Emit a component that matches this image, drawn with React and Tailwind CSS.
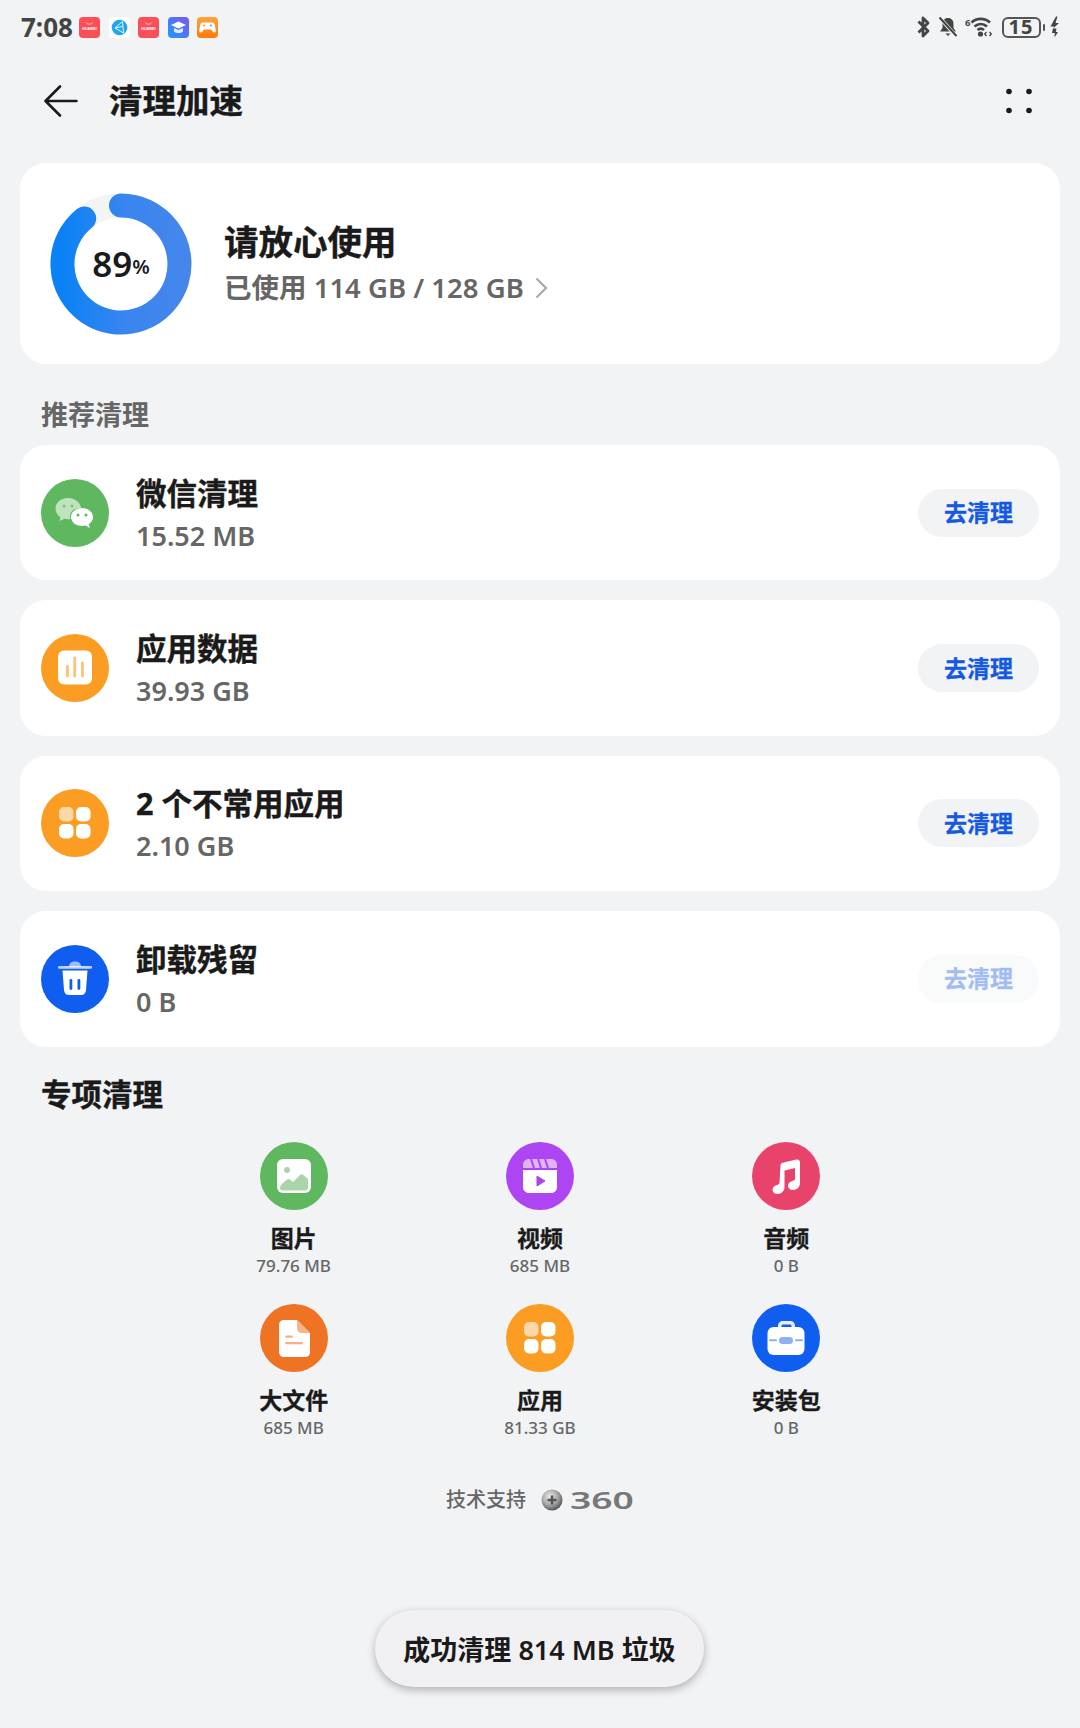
const Shop = () => (
  <svg width="21" height="21" viewBox="0 0 21 21" className="shrink-0">
    <rect width="21" height="21" rx="4" fill="#fb4e58" />
    <path d="M7.5 5.5c.5 2.2 5.5 2.2 6 0" fill="none" stroke="#fff" strokeWidth="0.8" opacity="0.9" />
    <text x="10.5" y="12.8" fontSize="3.6" fill="#fff" textAnchor="middle" fontFamily="Liberation Sans" fontWeight="700">HUAWEI</text>
  </svg>
);
const Tri = () => (
  <svg width="21" height="21" viewBox="0 0 21 21" className="shrink-0">
    <rect width="21" height="21" rx="4" fill="#ffffff" />
    <circle cx="10.5" cy="10.5" r="7.8" fill="#1ea7ee" />
    <path d="M13.5 4.5 6 11l8.5 5-1-11.5ZM6 11l7.5-1.5" fill="none" stroke="#fff" strokeWidth="0.9" />
  </svg>
);
const Cap = () => (
  <svg width="21" height="21" viewBox="0 0 21 21" className="shrink-0">
    <defs>
      <linearGradient id="cap" x1="0" y1="1" x2="1" y2="0">
        <stop offset="0" stopColor="#1f9bff" />
        <stop offset="1" stopColor="#7a55ef" />
      </linearGradient>
    </defs>
    <rect width="21" height="21" rx="4" fill="url(#cap)" />
    <path d="M10.5 4.5 18 8l-7.5 3.5L3 8Z" fill="#fff" />
    <path d="M6 11v3.5c2.5 2 6.5 2 9 0V11l-4.5 2Z" fill="#fff" opacity="0.85" />
  </svg>
);
const Game = () => (
  <svg width="21" height="21" viewBox="0 0 21 21" className="shrink-0">
    <defs>
      <linearGradient id="game" x1="0" y1="0" x2="0" y2="1">
        <stop offset="0" stopColor="#ffa43a" />
        <stop offset="1" stopColor="#fb7a10" />
      </linearGradient>
    </defs>
    <rect width="21" height="21" rx="4" fill="url(#game)" />
    <path d="M6 5.5h9c1.6 0 2.6 1 3 3l.8 5c.3 2-2 2.6-3 1.2L14 12.5H7l-1.8 2.2c-1 1.4-3.3.8-3-1.2l.8-5c.4-2 1.4-3 3-3Z" fill="#fff" />
    <circle cx="7" cy="8.5" r="1" fill="#fb8a20" />
    <circle cx="14" cy="8.5" r="1" fill="#4aa5ee" />
  </svg>
);

const StatusRight = () => (
  <div className="flex items-center">
    <svg width="15" height="22" viewBox="0 0 14 22" className="mr-[7px]" fill="none" stroke="#444" strokeWidth="2.8">
      <path d="M2 5.5 11.5 15 6.5 20V2l5 5L2 16.5" strokeLinejoin="round" />
    </svg>
    <svg width="20" height="22" viewBox="0 0 20 22" className="mr-[7px]">
      <path d="M10 2c3.5 0 5.5 2.5 5.5 6v4l2.500 3.500H2L4.500 12V8C4.500 4.500 6.500 2 10 2Z" fill="#444" />
      <path d="M7.500 17.500h5L10 20Z" fill="#444" />
      <path d="M2 2 18 20" stroke="#f1f3f5" strokeWidth="3.500" />
      <path d="M1.500 1.500 18.500 20" stroke="#444" strokeWidth="2" />
    </svg>
    <svg width="30" height="24" viewBox="0 0 30 24" className="mr-[7px]" fill="none" stroke="#444" strokeWidth="2.800">
      <text x="0" y="11" fontSize="9.500" fontWeight="700" fill="#444" stroke="none" fontFamily="Noto Sans">6</text>
      <path d="M6.500 7.500c5.200-4.800 13-4.800 18.500 0" />
      <path d="M9.500 11.500c3.800-3.200 8.700-3.200 12.500 0" />
      <path d="M12.500 15c2-1.700 4.500-1.700 6.500 0" />
      <circle cx="15.500" cy="19" r="2.600" fill="#444" stroke="none" />
      <path d="M21.500 17l-1.800 2 1.800 2M24.500 17l1.800 2-1.800 2" strokeWidth="1.300" />
    </svg>
    <div className="relative flex h-[21px] w-[39px] items-center justify-center rounded-[6px] border-2 border-[#555] text-[20px] leading-none font-bold tracking-[1px] text-[#444]">
      15
    </div>
    <div className="ml-[2px] h-[7px] w-[2.500px] rounded-sm bg-[#555]" />
    <svg width="11" height="22" viewBox="0 0 10 22" className="ml-[4px]" fill="#444">
      <path d="M6.500 0.500 1 10.500h3.800L3 13l6.500-6H6L8 .5Z" />
      <path d="M3.500 12.500h3.500L6.300 16H8.500L5 21.500 5.300 17H2.500Z" />
    </svg>
  </div>
);

const Donut = () => (
  <div className="relative h-[142px] w-[142px] shrink-0">
    <svg width="142" height="142" viewBox="0 0 142 142">
      <defs>
        <linearGradient id="ring" x1="0" y1="0" x2="1" y2="0">
          <stop offset="0" stopColor="#0a82f6" />
          <stop offset="0.55" stopColor="#3a85ef" />
          <stop offset="1" stopColor="#4486ec" />
        </linearGradient>
      </defs>
      <circle cx="71" cy="71" r="58.500" fill="none" stroke="#f4f4f4" strokeWidth="24" />
      <path
        d="M71 12.500A58.500 58.500 0 1 1 34.200 25.500"
        fill="none"
        stroke="url(#ring)"
        strokeWidth="24"
        strokeLinecap="round"
      />
    </svg>
    <div className="absolute inset-0 flex items-center justify-center text-[#1a1a1a]">
      <span className="text-[35px] leading-none font-semibold">89</span>
      <span className="mt-[6px] text-[20px] leading-none font-semibold">%</span>
    </div>
  </div>
);

const Circle = ({ color, children }) => (
  <svg width="68" height="68" viewBox="0 0 68 68" className="shrink-0">
    <circle cx="34" cy="34" r="34" fill={color} />
    {children}
  </svg>
);

const WeChatIcon = () => (
  <Circle color="#5fb85f">
    <path d="M27 19c7 0 12.500 4.500 13 10-5.500-.5-11 3-11 8.500 0 1 .2 1.800.5 2.500-1 .2-1.600.3-2.500.3-1.200 0-2.400-.2-3.500-.5L18.500 42l.8-3.800C16.300 36 14.500 33 14.500 29.500 14.500 23.500 20 19 27 19Z" fill="#fff" opacity="0.6" />
    <circle cx="23" cy="27" r="1.500" fill="#5fb85f" opacity="0.7" />
    <circle cx="31" cy="27" r="1.500" fill="#5fb85f" opacity="0.7" />
    <path d="M41 29c6.100 0 11 4 11 9 0 3-1.700 5.500-4.300 7.200L49 49l-4.500-2.400c-1.100.3-2.300.4-3.500.4-6.100 0-11-4-11-9s4.900-9 11-9Z" fill="#fff" />
    <circle cx="37" cy="36" r="1.500" fill="#5fb85f" />
    <circle cx="45" cy="36" r="1.500" fill="#5fb85f" />
  </Circle>
);
const ChartIcon = () => (
  <Circle color="#fa9d22">
    <rect x="17" y="16.500" width="34" height="34" rx="6" fill="#fff" />
    <rect x="25" y="31" width="2.800" height="12.500" rx="1.400" fill="#fbc27a" />
    <rect x="32.300" y="22.500" width="2.800" height="21" rx="1.400" fill="#fbc27a" />
    <rect x="40" y="27.500" width="2.800" height="16" rx="1.400" fill="#fbc27a" />
  </Circle>
);
const AppsIcon = () => (
  <Circle color="#fa9d22">
    <rect x="18" y="18" width="14.500" height="14.500" rx="5" fill="#fff" opacity="0.6" />
    <rect x="35" y="18" width="14.500" height="14.500" rx="5" fill="#fff" />
    <rect x="18" y="35" width="14.500" height="14.500" rx="5" fill="#fff" />
    <rect x="35" y="35" width="14.500" height="14.500" rx="5" fill="#fff" />
  </Circle>
);
const TrashIcon = () => (
  <Circle color="#0f5ef0">
    <path d="M28 22c0-4 2.500-5.500 6-5.500s6 1.500 6 5.500Z" fill="#fff" opacity="0.6" />
    <rect x="17" y="21" width="34" height="2.800" rx="1.400" fill="#fff" opacity="0.75" />
    <path d="M21.500 25.500h25L45 45c-.2 3-2 5-5 5H28c-3 0-4.800-2-5-5Z" fill="#fff" />
    <rect x="28.500" y="34" width="2.800" height="11" rx="1.400" fill="#0f5ef0" />
    <rect x="36.500" y="34" width="2.800" height="11" rx="1.400" fill="#0f5ef0" />
  </Circle>
);
const ImageIcon = () => (
  <Circle color="#5fb85f">
    <rect x="17" y="17" width="34" height="34" rx="6" fill="#fff" />
    <circle cx="27" cy="28" r="3" fill="#a9d6a9" />
    <path d="M20 46c0-2 1.500-3.500 3-5l4-3.500c1-.8 2-.8 3 0l3 2.500 7-7c1-1 2.500-1 3.300 0L48 37v9c0 1.500-1 2.500-2.500 2.500h-23C21 48.500 20 47.500 20 46Z" fill="#a9d6a9" />
  </Circle>
);
const VideoIcon = () => (
  <Circle color="#ad45f2">
    <path d="M23 17h22c3.500 0 6 2.500 6 6v3H17v-3c0-3.500 2.500-6 6-6Z" fill="#fff" opacity="0.6" />
    <path d="M25 17l3 9M32 17l3 9M39 17l3 9" stroke="#ad45f2" strokeWidth="2" />
    <path d="M17 28h34v17c0 3.500-2.500 6-6 6H23c-3.500 0-6-2.500-6-6Z" fill="#fff" />
    <path d="M31 34v10l8-5Z" fill="#ad45f2" stroke="#ad45f2" strokeWidth="1" strokeLinejoin="round" />
  </Circle>
);
const MusicIcon = () => (
  <Circle color="#e8446b">
    <path d="M28.500 23.500c0-1.500.8-2.500 2.300-2.800l13.500-3.200c2-.5 3.700.8 3.700 2.800V41c0 3.800-3 7-7 7-3 0-5-1.700-5-4.200 0-2.700 2.200-4.400 5-5 1.300-.3 2-1 2-2.200V26l-10.500 2.500V45c0 3.800-3 7-7 7-3 0-5-1.700-5-4.200 0-2.700 2.200-4.400 5-5 1.300-.3 2-1 2-2.200Z" fill="#fff" />
  </Circle>
);
const FileIcon = () => (
  <Circle color="#ee7322">
    <path d="M24 16h13l13 13v19c0 3-2 5-5 5H24c-3 0-5-2-5-5V21c0-3 2-5 5-5Z" fill="#fff" />
    <path d="M37 16l13 13h-8c-3 0-5-2-5-5Z" fill="#f5b48a" />
    <rect x="25" y="31.500" width="8" height="2.200" rx="1.100" fill="#f3b08a" />
    <rect x="25" y="38" width="18" height="2.200" rx="1.100" fill="#f3b08a" />
  </Circle>
);
const CaseIcon = () => (
  <Circle color="#0f5ef0">
    <path d="M26 24v-2c0-3 2-5 5-5h7c3 0 5 2 5 5v2h-3.500v-2c0-1-.5-1.500-1.500-1.500h-7c-1 0-1.500.5-1.500 1.500v2Z" fill="#fff" opacity="0.9" />
    <rect x="15.500" y="23" width="37" height="28" rx="6" fill="#fff" />
    <rect x="17" y="35.300" width="8" height="2" rx="1" fill="#8fb0f3" />
    <rect x="43" y="35.300" width="8" height="2" rx="1" fill="#8fb0f3" />
    <rect x="27" y="33" width="14" height="7" rx="3.500" fill="#8fb0f3" />
  </Circle>
);

const rows = [
  { icon: <WeChatIcon />, title: "微信清理", size: "15.52 MB" },
  { icon: <ChartIcon />, title: "应用数据", size: "39.93 GB" },
  { icon: <AppsIcon />, title: "2 个不常用应用", size: "2.10 GB" },
  { icon: <TrashIcon />, title: "卸载残留", size: "0 B", off: true },
];

const cells = [
  { icon: <ImageIcon />, name: "图片", size: "79.76 MB" },
  { icon: <VideoIcon />, name: "视频", size: "685 MB" },
  { icon: <MusicIcon />, name: "音频", size: "0 B" },
  { icon: <FileIcon />, name: "大文件", size: "685 MB" },
  { icon: <AppsIcon />, name: "应用", size: "81.33 GB" },
  { icon: <CaseIcon />, name: "安装包", size: "0 B" },
];

export default function App() {
  return (
    <div className="relative h-[1728px] w-[1080px] overflow-hidden bg-[#f1f3f5] font-['Noto_Sans','Noto_Sans_CJK_SC',sans-serif] text-[#1a1a1a]">
      <div className="flex h-[54px] items-center justify-between pr-[20px] pl-[21px]">
        <div className="flex items-center">
          <span className="mr-[7px] w-[51px] text-[26px] leading-none font-bold text-[#444]">7:08</span>
          <div className="flex gap-[8.500px]">
            <Shop />
            <Tri />
            <Shop />
            <Cap />
            <Game />
          </div>
        </div>
        <StatusRight />
      </div>

      <div className="flex h-[94px] items-center justify-between pr-[48px] pl-[44px]">
        <div className="flex items-center">
          <svg width="34" height="32" viewBox="0 0 34 32" fill="none" stroke="#1a1a1a" strokeWidth="2.600" strokeLinecap="round" strokeLinejoin="round">
            <path d="M16 1.500 1.500 16 16 30.500M1.500 16H32.500" />
          </svg>
          <span className="ml-[31px] text-[33.500px] leading-none font-bold [-webkit-text-stroke:0.4px]">清理加速</span>
        </div>
        <svg width="26" height="26" viewBox="0 0 26 26" fill="#1a1a1a">
          <circle cx="3" cy="3.500" r="2.800" />
          <circle cx="23" cy="3.500" r="2.800" />
          <circle cx="3" cy="22.500" r="2.800" />
          <circle cx="23" cy="22.500" r="2.800" />
        </svg>
      </div>

      <div className="mt-[15px] px-[20px]">
        <div className="flex h-[201px] items-center rounded-[26px] bg-white pl-[30px]">
          <Donut />
          <div className="mt-[2px] ml-[32px] flex flex-col">
            <span className="text-[34.500px] leading-[44px] font-bold [-webkit-text-stroke:0.4px]">请放心使用</span>
            <div className="mt-[2px] flex items-center">
              <span className="text-[27.500px] leading-[44px] font-semibold text-[#666]">已使用 114 GB / 128 GB</span>
              <svg width="13" height="22" viewBox="0 0 13 22" className="ml-[11px]" fill="none" stroke="#a8a8a8" strokeWidth="2.200">
                <path d="M1.500 1.500 11 11l-9.500 9.500" />
              </svg>
            </div>
          </div>
        </div>

        <div className="flex h-[81px] items-center pt-[19px] pl-[21px] text-[27px] leading-none font-bold text-[#666]">推荐清理</div>

        <div className="flex flex-col gap-[20px]">
          {rows.map((r) => (
            <div key={r.title} className="flex h-[135.400px] items-center rounded-[26px] bg-white pr-[21px] pl-[21px]">
              {r.icon}
              <div className="mt-[1px] ml-[27px] flex flex-1 flex-col">
                <span className="text-[30.500px] leading-[44px] font-bold [-webkit-text-stroke:0.4px]">{r.title}</span>
                <span className="mt-[1px] text-[27px] leading-[40px] font-semibold text-[#666]">{r.size}</span>
              </div>
              <div className={`flex h-[48px] w-[121px] items-center justify-center rounded-full bg-[#f1f3f5] text-[23px] leading-none font-bold text-[#1559e0] [-webkit-text-stroke:0.3px] ${r.off ? "opacity-40" : ""}`}>
                去清理
              </div>
            </div>
          ))}
        </div>

        <div className="flex h-[95px] items-center pl-[21px] text-[30.500px] leading-none font-bold [-webkit-text-stroke:0.4px]">专项清理</div>

        <div className="mx-auto grid w-[739px] grid-cols-3">
          {cells.map((c) => (
            <div key={c.name} className="flex h-[162px] flex-col items-center">
              {c.icon}
              <span className="mt-[13px] text-[23px] leading-[30px] font-bold [-webkit-text-stroke:0.3px]">{c.name}</span>
              <span className="mt-[1px] text-[17px] leading-[24px] font-medium text-[#666]">{c.size}</span>
            </div>
          ))}
        </div>

        <div className="flex h-[69px] items-center justify-center">
          <span className="text-[20px] leading-none font-medium text-[#666]">技术支持</span>
          <svg width="22" height="22" viewBox="0 0 22 22" className="ml-[15px]">
            <defs>
              <radialGradient id="ball" cx="0.4" cy="0.35" r="0.75">
                <stop offset="0" stopColor="#eeeeee" />
                <stop offset="0.55" stopColor="#a0a0a0" />
                <stop offset="1" stopColor="#3a3a3a" />
              </radialGradient>
            </defs>
            <circle cx="11" cy="11" r="10.500" fill="url(#ball)" />
            <path d="M11 6.500v9M6.500 11h9" stroke="#555" strokeWidth="2.500" />
          </svg>
          <span className="ml-[7px] w-[64px] origin-left scale-x-[1.550] text-[24px] leading-none font-semibold text-[#777]">360</span>
        </div>
      </div>

      <div className="absolute top-[1610px] left-[375px] flex h-[77px] w-[329px] items-center justify-center rounded-full bg-[#f1f1f3] pt-[2px] text-[27px] leading-none font-semibold shadow-[0_3px_8px_rgba(0,0,0,0.28)]">
        成功清理 814 MB 垃圾
      </div>
    </div>
  );
}
